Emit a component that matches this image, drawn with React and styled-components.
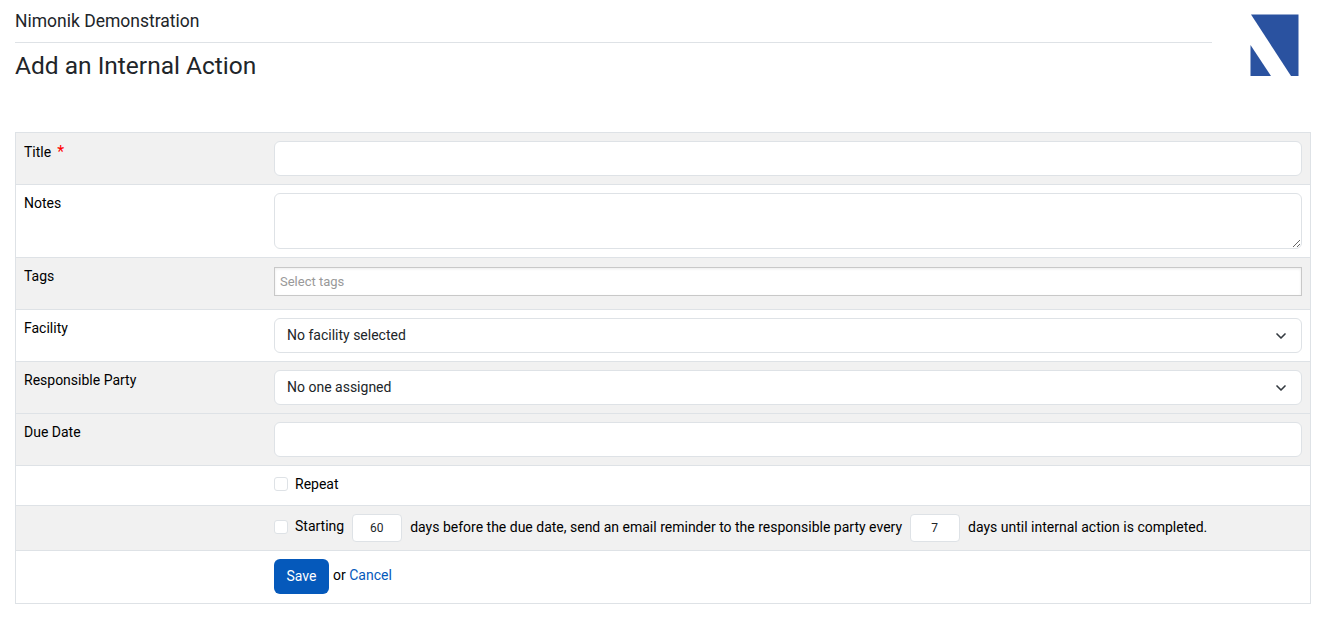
import styled, { createGlobalStyle } from 'styled-components';
import { LuChevronDown } from 'react-icons/lu';

const GlobalStyle = createGlobalStyle`
  body {
    margin: 0;
    background: #fff;
    color: #212529;
    font-family: Roboto, "Liberation Sans", sans-serif;
    font-size: 14px;
  }
`;

const Page = styled.div`
  padding: 0 13px 0 15px;
`;

const Header = styled.header`
  display: flex;
  height: 132px;
`;

const Titles = styled.div`
  width: 1197px;
`;

const Account = styled.div`
  height: 43px;
  box-sizing: border-box;
  padding-top: 11px;
  font-size: 17.5px;
  line-height: 21px;
  border-bottom: 1px solid #dee2e6;
`;

const Heading = styled.h1`
  margin: 8px 0 0;
  font-size: 24.5px;
  font-weight: 400;
  line-height: 30px;
`;

const Logo = styled.svg`
  width: 49px;
  height: 62px;
  margin: 14px 0 0 38px;
`;

const Form = styled.form`
  width: 1296px;
  box-sizing: border-box;
  border: 1px solid #dee2e6;
  border-bottom: 0;
`;

const Row = styled.div`
  display: grid;
  grid-template-columns: 250px 1028px;
  box-sizing: border-box;
  padding: 8px;
  height: ${(p) => p.$height}px;
  background: ${(p) => (p.$shaded ? '#f1f1f1' : '#fff')};
  border-bottom: 1px solid #dee2e6;
`;

const Label = styled.label`
  color: #000;
  line-height: 20px;
  padding-top: ${(p) => p.$top || 0}px;
`;

const Star = styled.span`
  color: #f00;
  margin-left: 6px;
  font-size: 16px;
  line-height: 20px;
`;

const TextInput = styled.input`
  display: block;
  box-sizing: border-box;
  width: 100%;
  height: 35px;
  border: 1px solid #dee2e6;
  border-radius: 6px;
  background: #fff;
  outline: none;
`;

const TextArea = styled.textarea`
  display: block;
  box-sizing: border-box;
  width: 100%;
  height: 56px;
  border: 1px solid #dee2e6;
  border-radius: 6px;
  background: #fff;
  outline: none;
  resize: vertical;
`;

const TagBox = styled.div`
  box-sizing: border-box;
  height: 29px;
  margin-top: 1px;
  padding-left: 5px;
  border: 1px solid #c8c8c8;
  background: #fff;
  box-shadow: inset 0 1px 3px rgba(0, 0, 0, 0.08);
  color: #999;
  font-size: 13px;
  line-height: 27px;
`;

const Select = styled.div`
  display: flex;
  align-items: center;
  justify-content: space-between;
  box-sizing: border-box;
  height: 35px;
  padding: 0 12px 2px;
  border: 1px solid #dee2e6;
  border-radius: 6px;
  background: #fff;
  color: #212529;
  svg {
    width: 16px;
    height: 16px;
    margin-top: 2px;
    color: #343a40;
    stroke-width: 2.5;
  }
`;

const CheckRow = styled.div`
  display: flex;
  align-items: center;
  height: ${(p) => p.$height}px;
  color: #000;
  white-space: nowrap;
`;

const Checkbox = styled.span`
  flex: none;
  box-sizing: border-box;
  width: 14px;
  height: 14px;
  margin-right: 7px;
  border: 1px solid #dee2e6;
  border-radius: 3px;
  background: #fff;
`;

const Lifted = styled.span`
  padding-bottom: 2px;
`;

const NumberBox = styled.input`
  box-sizing: border-box;
  width: 50px;
  height: 28px;
  margin: 0 8px -2px;
  padding: 0 1px 0 0;
  border: 1px solid #dee2e6;
  border-radius: 4px;
  background: #fff;
  color: #212529;
  font-family: inherit;
  font-size: 12px;
  text-align: center;
  outline: none;
`;

const Actions = styled.div`
  display: flex;
  align-items: flex-start;
  color: #000;
`;

const SaveButton = styled.button`
  width: 55px;
  height: 35px;
  padding: 0 0 2px;
  border: 0;
  border-radius: 6px;
  background: #0559bb;
  color: #fff;
  font-family: inherit;
  font-size: 14px;
  font-weight: 400;
`;

const OrText = styled.span`
  margin-left: 4px;
  line-height: 32px;
`;

const CancelLink = styled.a`
  color: #0559bb;
  text-decoration: none;
`;

export default function App() {
  return (
    <>
      <GlobalStyle />
      <Page>
        <Header>
          <Titles>
            <Account>Nimonik Demonstration</Account>
            <Heading>Add an Internal Action</Heading>
          </Titles>
          <Logo viewBox="0 0 49 62">
            <path fill="#2a52a0" d="M1 0.500H48.500V62H41Z" />
            <path fill="#2a52a0" d="M0.500 31L21 62H0.500Z" />
          </Logo>
        </Header>
        <Form>
          <Row $shaded $height={52}>
            <Label $top={1}>Title<Star>*</Star></Label>
            <TextInput />
          </Row>
          <Row $height={73}>
            <Label>Notes</Label>
            <TextArea />
          </Row>
          <Row $shaded $height={52}>
            <Label>Tags</Label>
            <TagBox>Select tags</TagBox>
          </Row>
          <Row $height={52}>
            <Label>Facility</Label>
            <Select>No facility selected<LuChevronDown /></Select>
          </Row>
          <Row $shaded $height={52}>
            <Label>Responsible Party</Label>
            <Select>No one assigned<LuChevronDown /></Select>
          </Row>
          <Row $shaded $height={52}>
            <Label>Due Date</Label>
            <TextInput />
          </Row>
          <Row $height={40}>
            <span />
            <CheckRow $height={19}><Checkbox />Repeat</CheckRow>
          </Row>
          <Row $shaded $height={45}>
            <span />
            <CheckRow $height={26}>
              <Checkbox />
              <Lifted>Starting</Lifted>
              <NumberBox defaultValue="60" />
              days before the due date, send an email reminder to the responsible party every
              <NumberBox defaultValue="7" />
              days until internal action is completed.
            </CheckRow>
          </Row>
          <Row $height={53}>
            <span />
            <Actions>
              <SaveButton type="button">Save</SaveButton>
              <OrText>or <CancelLink href="#">Cancel</CancelLink></OrText>
            </Actions>
          </Row>
        </Form>
      </Page>
    </>
  );
}
